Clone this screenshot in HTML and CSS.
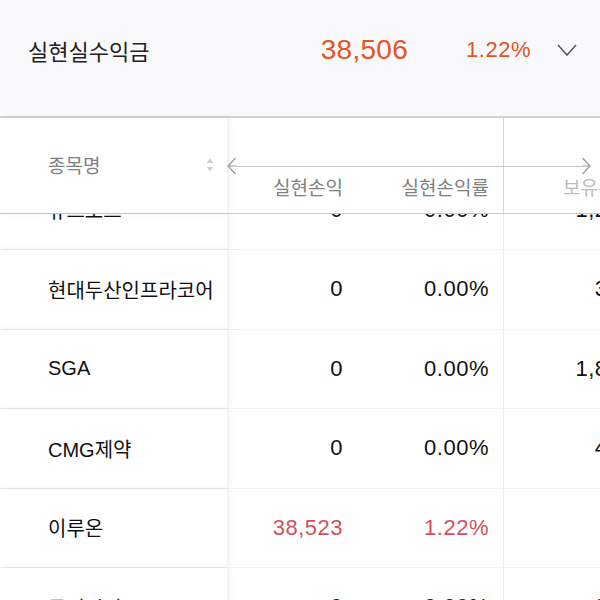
FILE: index.html
```html
<!DOCTYPE html>
<html lang="ko">
<head>
<meta charset="utf-8">
<link rel="stylesheet" href="styles.css">
</head>
<body>
<div class="screen">
  <header class="summary">
    <span class="summary-title">실현실수익금</span>
    <span class="summary-amount">38,506</span>
    <span class="summary-rate">1.22%</span>
    <svg class="summary-toggle" width="20" height="12" viewBox="0 0 20 12"><path d="M1 1 L10 11 L19 1" fill="none" stroke="#555" stroke-width="1.5"/></svg>
  </header>
  <section class="table">
    <div class="thead">
      <div class="th th-name">
        <span>종목명</span>
        <svg class="sort" width="8" height="14" viewBox="0 0 8 14"><path d="M4 0.5 L7.5 5 L0.5 5 Z M4 13.5 L7.5 9 L0.5 9 Z" fill="#cfcfcf"/></svg>
      </div>
      <div class="th th-num">실현손익</div>
      <div class="th th-num">실현손익률</div>
      <div class="th th-num th-sep th-dim">보유수량</div>
      <div class="scroll-hint">
        <svg width="9" height="18" viewBox="0 0 9 18"><path d="M8.5 1 L1 9 L8.5 17 M1 9 H9" fill="none" stroke="#9a9a9a" stroke-width="1.2"/></svg>
        <span class="scroll-line"></span>
        <svg width="9" height="18" viewBox="0 0 9 18"><path d="M0.5 1 L8 9 L0.5 17 M0 9 H8" fill="none" stroke="#9a9a9a" stroke-width="1.2"/></svg>
      </div>
    </div>
    <div class="tbody">
      <div class="tr">
        <div class="td td-name">휴스토드</div>
        <div class="td td-num">0</div>
        <div class="td td-num">0.00%</div>
        <div class="td td-num td-sep">1,250</div>
      </div>
      <div class="tr">
        <div class="td td-name">현대두산인프라코어</div>
        <div class="td td-num">0</div>
        <div class="td td-num">0.00%</div>
        <div class="td td-num td-sep">320</div>
      </div>
      <div class="tr">
        <div class="td td-name">SGA</div>
        <div class="td td-num">0</div>
        <div class="td td-num">0.00%</div>
        <div class="td td-num td-sep">1,800</div>
      </div>
      <div class="tr">
        <div class="td td-name">CMG제약</div>
        <div class="td td-num">0</div>
        <div class="td td-num">0.00%</div>
        <div class="td td-num td-sep">450</div>
      </div>
      <div class="tr">
        <div class="td td-name">이루온</div>
        <div class="td td-num up">38,523</div>
        <div class="td td-num up">1.22%</div>
        <div class="td td-num td-sep">0</div>
      </div>
      <div class="tr">
        <div class="td td-name">동인시티</div>
        <div class="td td-num">0</div>
        <div class="td td-num">0.00%</div>
        <div class="td td-num td-sep">210</div>
      </div>
    </div>
  </section>
</div>
</body>
</html>
```
FILE: styles.css
```css
* { box-sizing: border-box; }
html, body { margin: 0; padding: 0; background: #fff; }
body {
  font-family: "Liberation Sans", "Noto Sans CJK KR", sans-serif;
  color: #111;
}
.screen {
  width: 600px;
  height: 600px;
  overflow: hidden;
}
.summary {
  height: 118px;
  background: #f9f9fb;
  border-bottom: 2px solid #d2d2d4;
  display: flex;
  align-items: center;
  padding: 0 23px 16px 28px;
}
.summary-title {
  font-family: "Noto Sans CJK KR", sans-serif;
  font-size: 22px;
  color: #222;
  flex: 1;
}
.summary-amount {
  font-size: 28px;
  letter-spacing: 0.3px;
  color: #e8521f;
}
.summary-rate {
  font-size: 22px;
  letter-spacing: 0.5px;
  color: #e8521f;
  margin-left: 58px;
}
.summary-toggle {
  margin-left: 26px;
  display: block;
}
.table {
  width: 647px;
}
.thead {
  position: relative;
  z-index: 2;
  display: grid;
  grid-template-columns: 227px 130px 146px 144px;
  height: 96px;
  background: #fff;
  border-bottom: 1px solid #c9c9c9;
}
.th {
  font-family: "Noto Sans CJK KR", sans-serif;
  font-size: 19px;
  color: #808080;
  background: #fff;
}
.th-name {
  position: relative;
  z-index: 1;
  display: flex;
  align-items: center;
  justify-content: space-between;
  padding: 0 13px 2px 48px;
  box-shadow: 2px 0 6px rgba(0, 0, 0, 0.07);
}
.sort { display: block; }
.th-num {
  display: flex;
  align-items: flex-end;
  justify-content: flex-end;
  padding: 0 14px 13px 0;
  line-height: 26px;
}
.th-sep { border-left: 1px solid #d6d6d6; }
.th-dim { color: #bdbdbd; }
.scroll-hint {
  position: absolute;
  left: 227px;
  top: 39px;
  width: 364px;
  height: 18px;
  display: flex;
  align-items: center;
  z-index: 3;
}
.scroll-hint svg { display: block; flex: none; }
.scroll-line {
  flex: 1;
  height: 1px;
  background: #c6c6c6;
}
.tbody {
  margin-top: -43.5px;
}
.tr {
  display: grid;
  grid-template-columns: 227px 130px 146px 144px;
  height: 79.5px;
  border-bottom: 1px solid #f2f2f2;
}
.td {
  display: flex;
  align-items: center;
  background: #fff;
}
.td-name {
  position: relative;
  z-index: 1;
  padding-left: 48px;
  font-size: 20px;
  box-shadow: 2px 0 6px rgba(0, 0, 0, 0.07);
}
.td-num {
  justify-content: flex-end;
  padding-right: 14px;
  font-size: 22px;
  letter-spacing: 0.5px;
}
.td-sep { border-left: 1px solid #ececec; }
.up { color: #d6505c; }
```
